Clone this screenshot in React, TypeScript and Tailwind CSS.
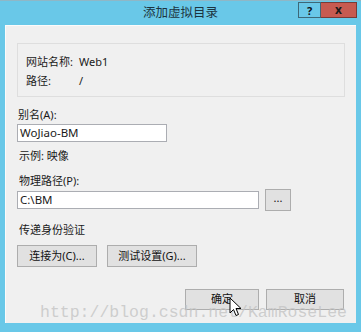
const ui = { fontFamily: '"Segoe UI","Noto Sans","Noto Sans CJK SC",sans-serif' }

function Btn({ children, className = '' }: { children: React.ReactNode; className?: string }) {
  return (
    <div
      className={`flex items-center justify-center border border-[#adadad] bg-[#e1e1e1] text-[11px] text-[#111] ${className}`}
    >
      {children}
    </div>
  )
}

function Cursor() {
  return (
    <svg className="absolute left-[229px] top-[297px]" width="13" height="20" viewBox="0 0 13 20">
      <path
        d="M1 1 L1 16 L4.5 12.5 L7 18.5 L9.5 17.5 L7 11.5 L12 11.5 Z"
        fill="#fff"
        stroke="#000"
        strokeWidth="1"
        strokeLinejoin="round"
      />
    </svg>
  )
}

export default function App() {
  return (
    <div className="relative h-[332px] w-[361px] overflow-hidden bg-[#69c8e8]" style={ui}>
      {/* title bar */}
      <div className="grid h-[25px] grid-cols-[1fr_auto_1fr] border-t border-[#8fb7c6]">
        <div />
        <div className="pt-[4px] text-[12.5px] leading-[16px] text-[#1c3440]">添加虚拟目录</div>
        <div className="flex justify-end pr-[4px] pt-[1px]">
          <div className="flex h-[16px] w-[23px] items-center justify-center border border-[#3d6878] text-[11px] font-bold leading-none text-[#111]">
            ?
          </div>
          <div className="flex h-[16px] w-[36px] items-center justify-center border border-l-0 border-[#7a3a36] bg-[#c75a50] text-[12px] font-bold leading-none text-[#1a1a1a]">
            x
          </div>
        </div>
      </div>

      {/* content */}
      <div className="mx-[5px] flex h-[298px] flex-col border-l border-t border-[#fbfbfb] bg-[#f0f0f0] px-[11px] pt-[17px] text-[11px] text-[#1a1a1a]">
        <div className="flex h-[54px] flex-col gap-[3px] border border-[#dedede] px-[8px] pt-[10px]">
          <div className="flex h-[16px] items-center">
            <span className="w-[53px]">网站名称:</span>
            <span>Web1</span>
          </div>
          <div className="flex h-[16px] items-center">
            <span className="w-[53px]">路径:</span>
            <span>/</span>
          </div>
        </div>

        <div className="ml-[1px] mt-[10px] h-[16px] leading-[16px]">别名(A):</div>
        <div className="mt-[1px] flex h-[18px] w-[150px] items-center border border-[#abadb3] bg-white pl-[2px] text-[11.5px]">
          WoJiao-BM
        </div>

        <div className="ml-[2px] mt-[6px] h-[16px] leading-[16px]">示例: 映像</div>

        <div className="ml-[2px] mt-[9px] h-[16px] leading-[16px]">物理路径(P):</div>
        <div className="flex h-[22px] items-center gap-[6px]">
          <div className="flex h-[18px] w-[242px] items-center border border-[#abadb3] bg-white pl-[2px] text-[11.5px]">
            C:\BM
          </div>
          <Btn className="h-[22px] w-[26px] pb-[3px]">...</Btn>
        </div>

        <div className="ml-[2px] mt-[11px] h-[16px] leading-[16px]">传递身份验证</div>
        <div className="mt-[7px] flex gap-[10px]">
          <Btn className="h-[22px] w-[80px]">连接为(C)...</Btn>
          <Btn className="h-[22px] w-[90px]">测试设置(G)...</Btn>
        </div>

        <div className="mt-[22px] flex justify-end gap-[7px] pr-[1px]">
          <Btn className="h-[21px] w-[74px] border-[#3c7fb1] bg-[#c9e8f8]">确定</Btn>
          <Btn className="h-[21px] w-[78px]">取消</Btn>
        </div>
      </div>

      {/* watermark */}
      <div
        className="pointer-events-none absolute left-[40px] top-[303px] text-[16.5px] leading-[20px] text-[#c4c4c4]/80"
        style={{ fontFamily: '"Liberation Mono",monospace' }}
      >
        http://blog.csdn.net/KamRoseLee
      </div>
      <Cursor />
    </div>
  )
}
